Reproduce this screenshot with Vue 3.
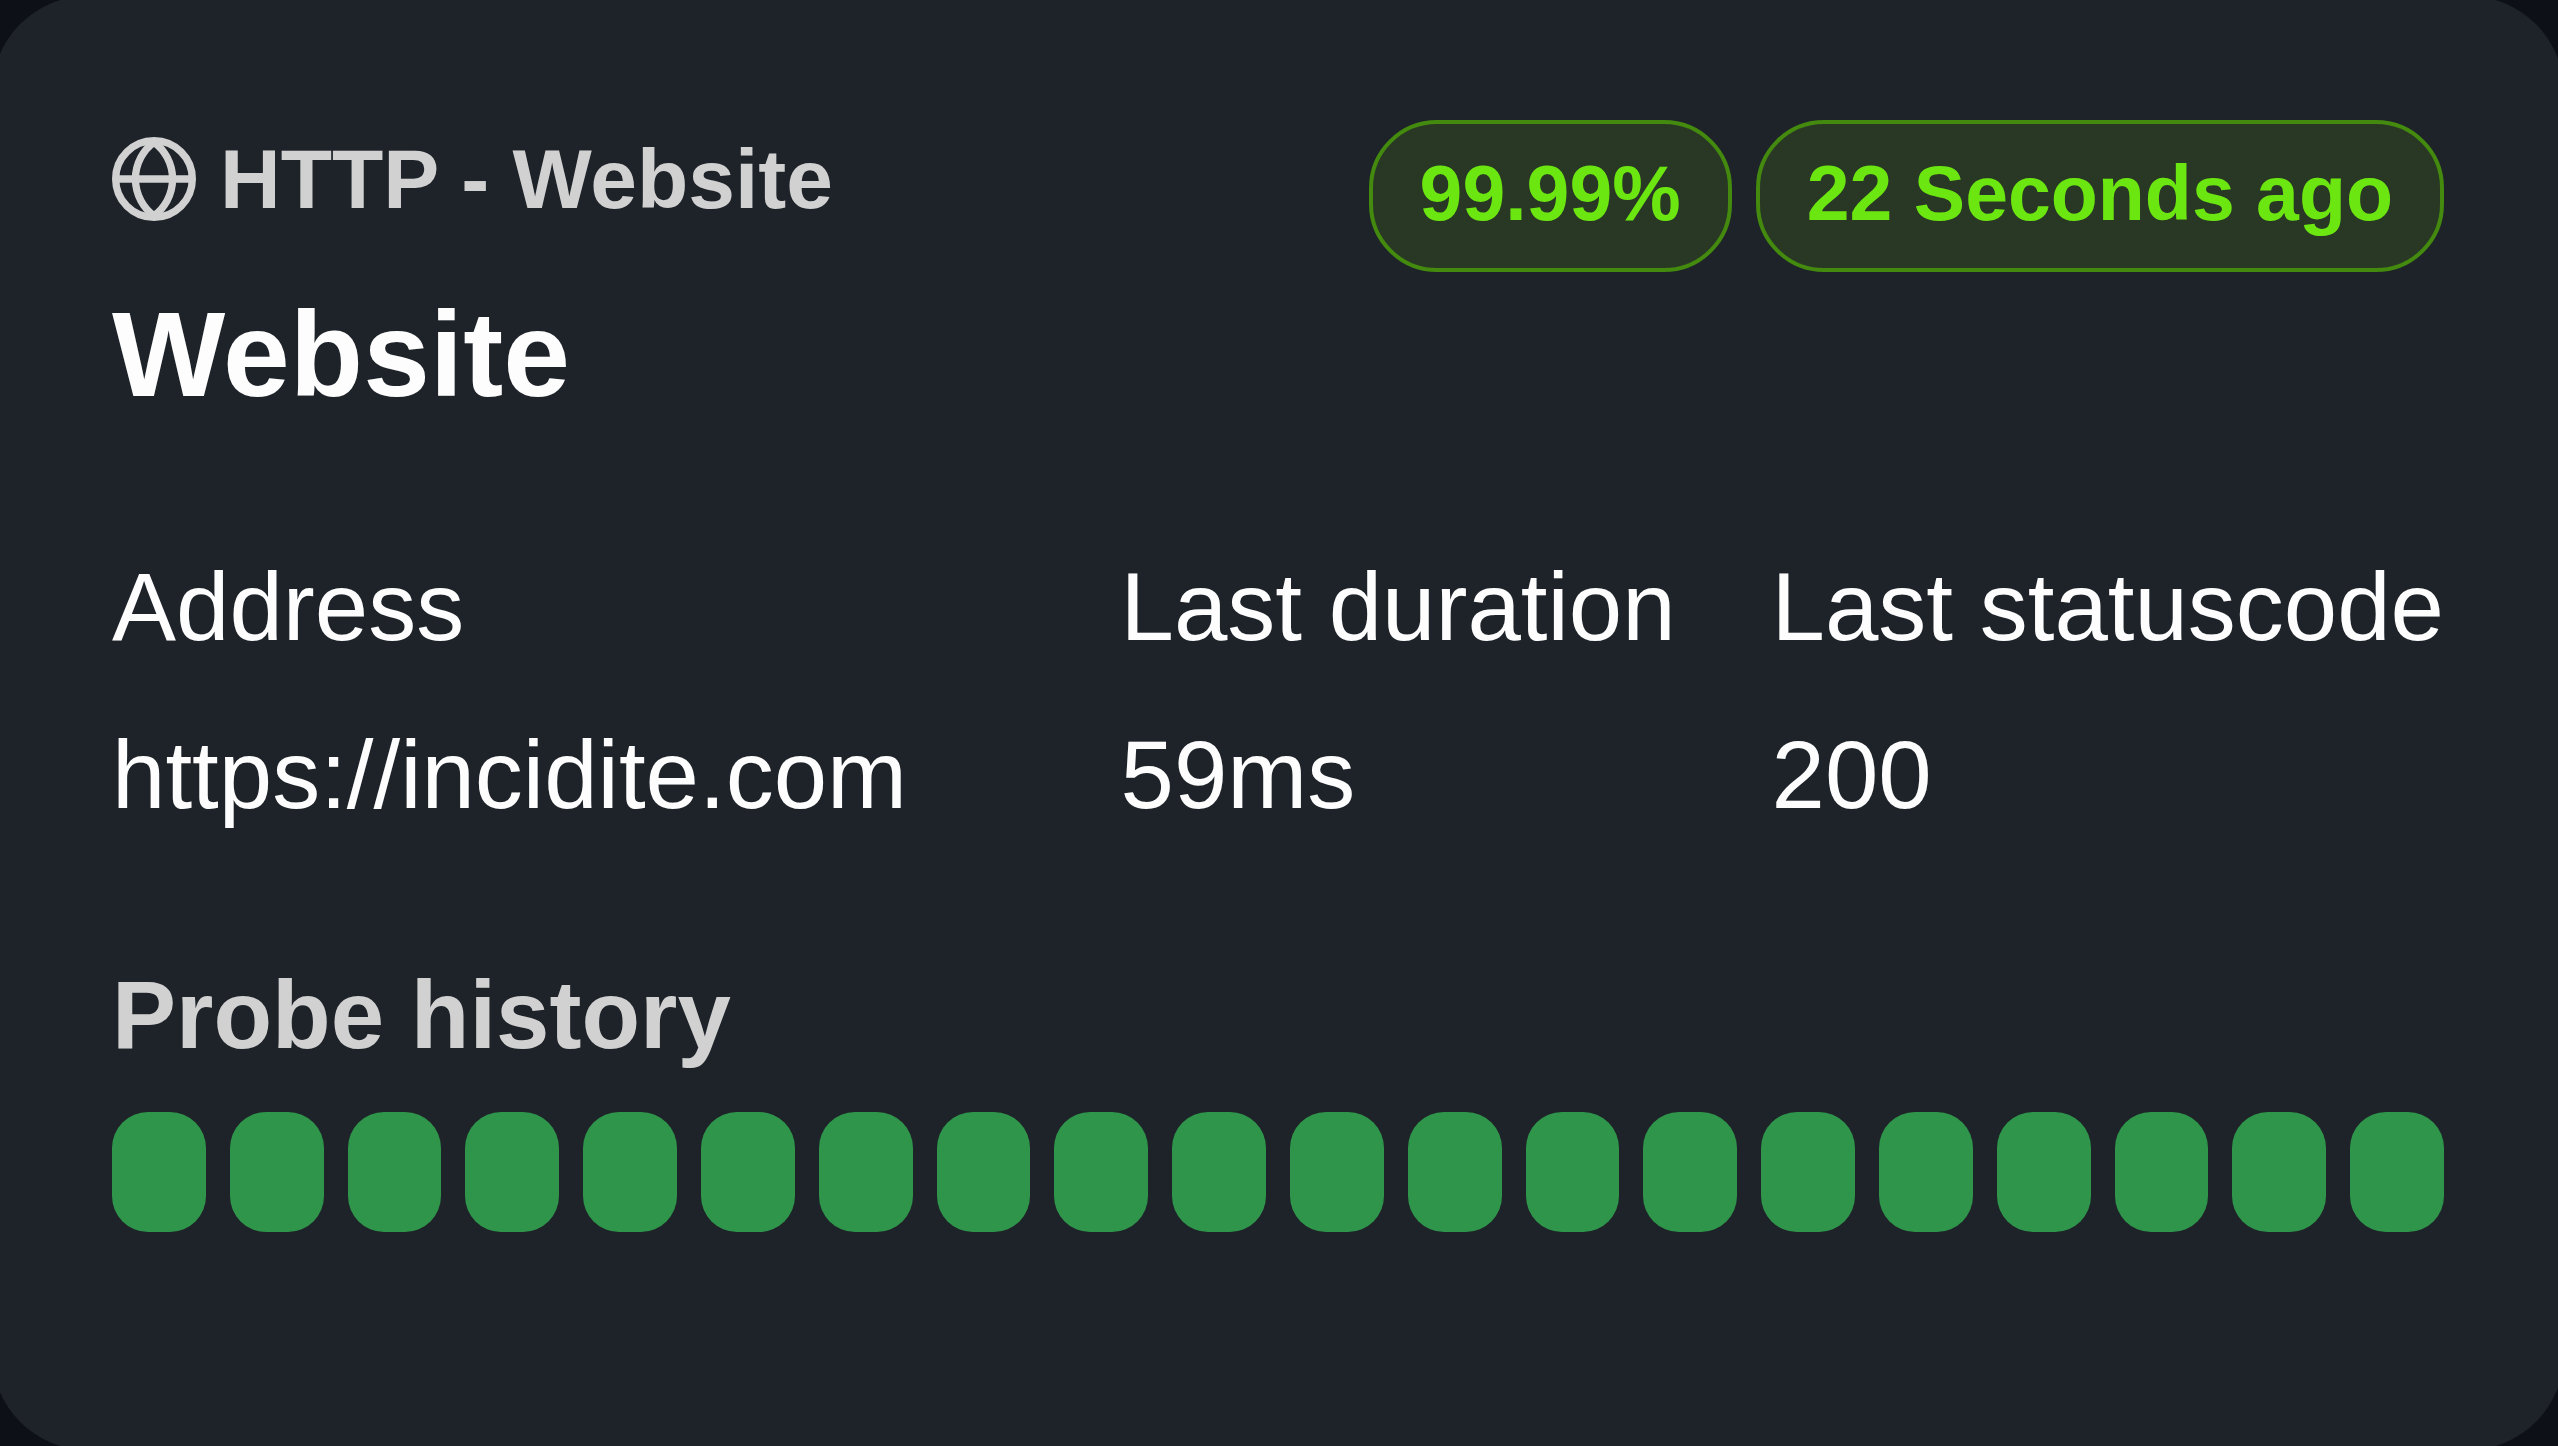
<script setup>
const columns = [
  { label: 'Address', value: 'https://incidite.com' },
  { label: 'Last duration', value: '59ms' },
  { label: 'Last statuscode', value: '200' }
]
const badges = ['99.99%', '22 Seconds ago']
const probes = Array.from({ length: 20 }, (_, i) => i + 1)
</script>

<template>
  <main class="page">
    <article class="card">
      <header class="header">
        <div class="heading">
          <p class="kind">
            <svg class="globe" viewBox="0 0 16 16" fill="none" stroke="currentColor" stroke-width="1.4" aria-hidden="true">
              <circle cx="8" cy="8" r="7.3" />
              <path d="M.7 8h14.6" />
              <path d="M8 1A8.7 8.7 0 0 0 8 15" />
              <path d="M8 1A8.7 8.7 0 0 1 8 15" />
            </svg>
            <span>HTTP - Website</span>
          </p>
          <h1 class="title">Website</h1>
        </div>
        <div class="badges">
          <span v-for="badge in badges" :key="badge" class="badge">{{ badge }}</span>
        </div>
      </header>

      <table class="details">
        <thead>
          <tr>
            <th v-for="column in columns" :key="column.label" scope="col">{{ column.label }}</th>
          </tr>
        </thead>
        <tbody>
          <tr>
            <td v-for="column in columns" :key="column.label">{{ column.value }}</td>
          </tr>
        </tbody>
      </table>

      <section class="history">
        <h2 class="subtitle">Probe history</h2>
        <div class="probes">
          <span v-for="probe in probes" :key="probe" class="probe"></span>
        </div>
      </section>
    </article>
  </main>
</template>

<style>
body {
  margin: 0;
  background: #0d1117;
}
</style>

<style scoped>
.page {
  display: flex;
  min-height: 100vh;
  overflow: hidden;
  background: #0d1117;
  color: #fdfdfd;
  font-family: Arial, "Liberation Sans", sans-serif;
}

.card {
  flex: 1;
  box-sizing: border-box;
  margin: -4px -6px -4px -8px;
  padding: 124px 120px;
  border-radius: 96px;
  background: #1e2329;
}

.header {
  display: flex;
  align-items: flex-start;
  justify-content: space-between;
}

.kind {
  display: flex;
  align-items: center;
  gap: 24px;
  margin: 0 0 44px;
  color: #d1d1d1;
  font-size: 84px;
  font-weight: 700;
  line-height: 118px;
}

.globe {
  width: 84px;
  height: 84px;
}

.title {
  margin: 0;
  font-size: 120px;
  line-height: 144px;
}

.badges {
  display: flex;
  gap: 24px;
}

.badge {
  padding: 21px 47px 27px;
  border: 4px solid #438a0f;
  border-radius: 68px;
  background: #293824;
  color: #6ce611;
  font-size: 77px;
  font-weight: 700;
  line-height: 96px;
  white-space: nowrap;
}

.details {
  width: 100%;
  margin-top: 97px;
  border-collapse: collapse;
  font-size: 96px;
  line-height: 168px;
}

.details th,
.details td {
  padding: 0 96px 0 0;
  font-weight: 400;
  text-align: left;
  white-space: nowrap;
}

.details th:first-child {
  width: 100%;
}

.details th:last-child,
.details td:last-child {
  padding-right: 0;
}

.history {
  margin-top: 96px;
}

.subtitle {
  margin: 0 0 37px;
  color: #d1d1d1;
  font-size: 96px;
  line-height: 120px;
}

.probes {
  display: flex;
  gap: 24px;
}

.probe {
  flex: 1;
  height: 120px;
  border-radius: 36px;
  background: #2f954a;
}
</style>
